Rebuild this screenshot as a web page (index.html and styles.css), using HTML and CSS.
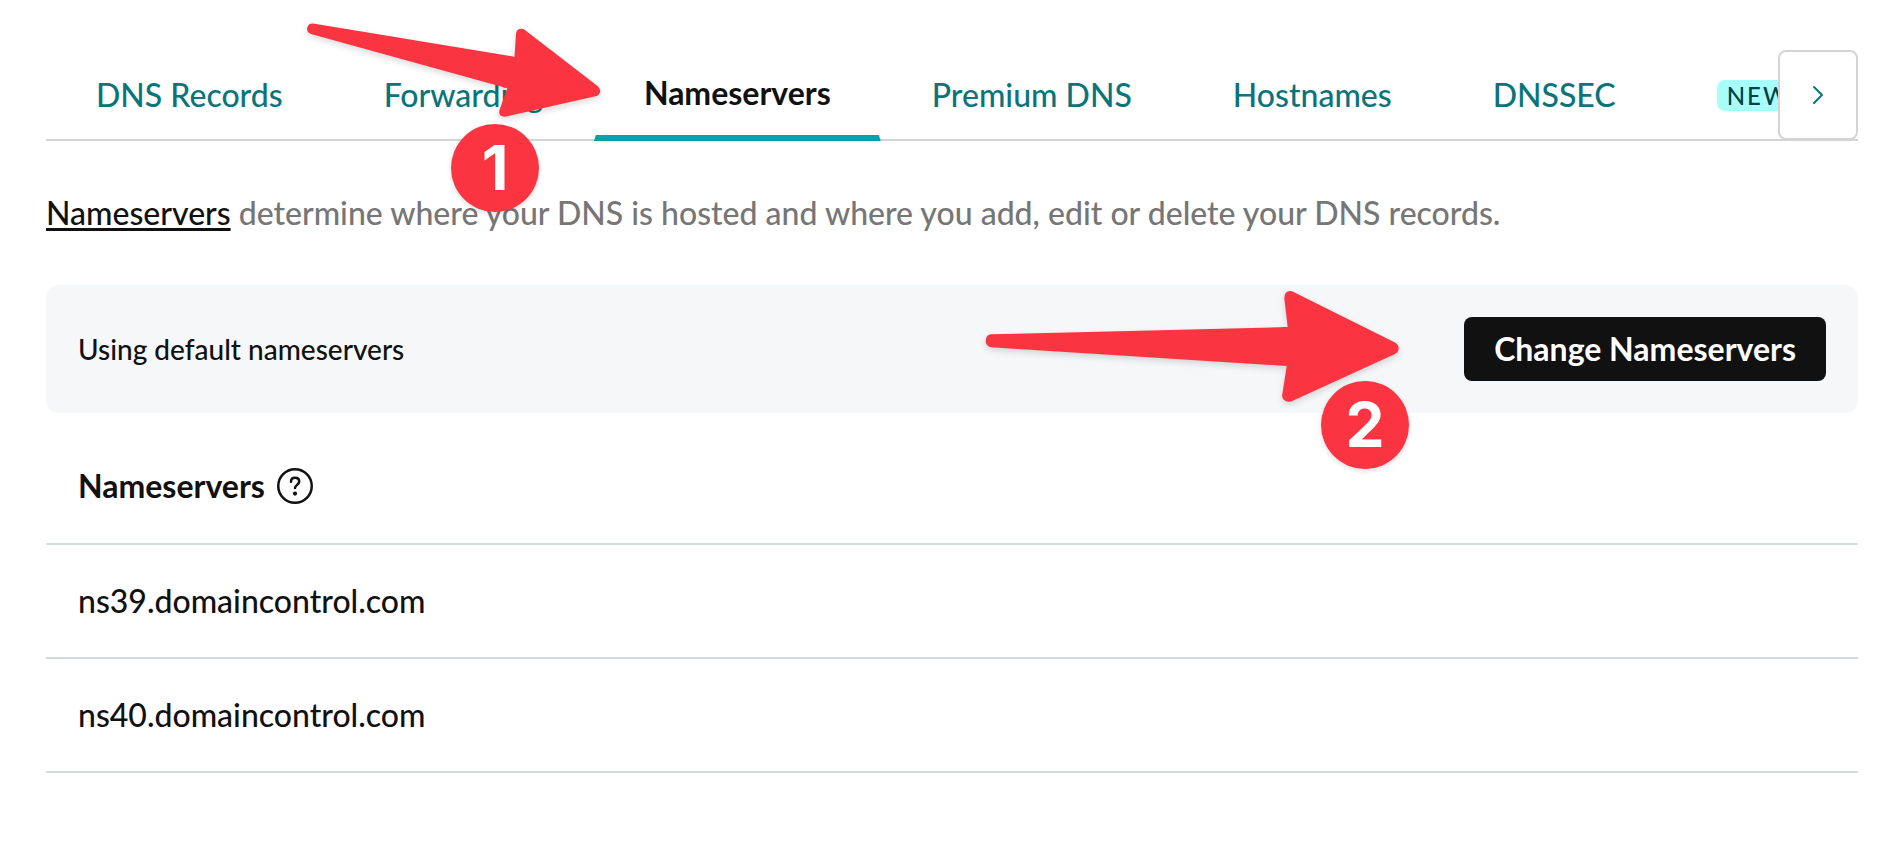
FILE: index.html
```html
<!DOCTYPE html>
<html lang="en">
<head>
<meta charset="utf-8">
<title>Nameservers</title>
<meta name="viewport" content="width=device-width, initial-scale=1">
<link rel="stylesheet" href="styles.css">
</head>
<body>
<main class="page">
  <div class="tabbar">
    <nav class="tabs" aria-label="DNS management">
      <a class="tab" href="#records">DNS Records</a>
      <a class="tab" href="#forwarding">Forwarding</a>
      <a class="tab tab-active" href="#nameservers" aria-current="page">Nameservers</a>
      <a class="tab" href="#premium">Premium DNS</a>
      <a class="tab" href="#hostnames">Hostnames</a>
      <a class="tab" href="#dnssec">DNSSEC</a>
      <a class="tab" href="#new"><span class="badge">NEW</span></a>
    </nav>
    <button class="scroll-next" type="button" aria-label="Next tabs">
      <svg width="12" height="20" viewBox="0 0 12 20" fill="none" stroke="currentColor" stroke-width="2" stroke-linecap="round" stroke-linejoin="round"><path d="M2 2l8 8-8 8"/></svg>
    </button>
    <svg class="arrow arrow-one" width="310" height="110" viewBox="300 16 310 110" aria-hidden="true">
      <path d="M313 23.6 514.5 56.7 516 34Q516.3 28.7 521.5 28.7 523.7 28.8 525.5 30.5L597.5 86Q600.3 88.4 600.2 91 599.8 95 596.5 95.9L506 116.6Q499 117.6 499.2 111.5L500 108.5 507.3 88.3 311 33.9Q306.8 32.3 307 28.7 308 23.2 313 23.6Z"/>
    </svg>
    <span class="step step-one">1</span>
  </div>

  <p class="intro"><a class="intro-link" href="#help">Nameservers</a> determine where your DNS is hosted and where you add, edit or delete your DNS records.</p>

  <section class="panel">
    <span class="panel-text">Using default nameservers</span>
    <button class="primary" type="button">Change Nameservers</button>
    <svg class="arrow arrow-two" width="430" height="130" viewBox="976 282 430 130" aria-hidden="true">
      <path d="M991 334.3 1287.7 327 1284.3 298.3Q1284.3 291.4 1290 291 1291.8 291 1293.5 292L1394.5 342.3Q1398.7 344.6 1398.7 348.5 1398.5 352 1395 354L1291.7 401.2Q1287 402.6 1284 400 1281.8 398 1282.2 395L1286.7 366 991 347.3Q985.9 346.5 985.7 341 986 334.6 991 334.3Z"/>
    </svg>
    <span class="step step-two">2</span>
  </section>

  <table class="servers">
    <thead>
      <tr><th scope="col">
        <div class="heading">Nameservers
          <button class="help" type="button" aria-label="About nameservers">
            <svg width="36" height="36" viewBox="0 0 36 36" fill="none" stroke="currentColor" stroke-linecap="round"><circle cx="18" cy="18" r="16.75" stroke-width="2.5"/><path d="M14 13.8C14 11.4 15.6 9.8 18 9.8s4.2 1.5 4.2 3.8c0 3.1-4.2 3.4-4.2 6.4" stroke-width="2.5"/><circle cx="18" cy="25.6" r="2.1" fill="currentColor" stroke="none"/></svg>
          </button>
        </div>
      </th></tr>
    </thead>
    <tbody>
      <tr><td>ns39.domaincontrol.com</td></tr>
      <tr><td>ns40.domaincontrol.com</td></tr>
    </tbody>
  </table>
</main>
</body>
</html>
```
FILE: styles.css
```css
* {
  box-sizing: border-box;
}

body {
  margin: 0;
  background: #fff;
  color: #111;
  font-family: Lato, "Open Sans", sans-serif;
  font-size: 32px;
  font-weight: 500;
  line-height: 48px;
}

button {
  font: inherit;
  cursor: pointer;
}

.page {
  padding: 50px 42px 48px 46px;
}

/* Tab bar */
.tabbar {
  position: relative;
  border-bottom: 2px solid #d4d4d4;
}

.tabs {
  display: flex;
  gap: 1px;
  overflow: hidden;
  margin-bottom: -2px;
}

.tab {
  position: relative;
  flex: none;
  padding: 21px 50px 22px;
  color: #09757a;
  text-decoration: none;
}

.tab-active {
  padding: 19px 50px 24px;
  color: #111;
  font-weight: 700;
}

.tab-active::after {
  content: "";
  position: absolute;
  inset: auto 0 0;
  height: 6px;
  background: #00a4a6;
  clip-path: polygon(2px 0, calc(100% - 2px) 0, 100% 100%, 0 100%);
}

.badge {
  display: inline-block;
  padding: 0 10px;
  border-radius: 8px;
  background: #a6fff8;
  color: #004249;
  font-size: 24px;
  line-height: 31px;
  letter-spacing: 2px;
  vertical-align: 2px;
}

.scroll-next {
  position: absolute;
  top: 0;
  right: 0;
  bottom: -1px;
  display: grid;
  place-items: center;
  width: 80px;
  padding: 0;
  border: 2px solid #d4d4d4;
  border-radius: 8px;
  background: #fff;
  color: #09757a;
}

/* Introduction */
.intro {
  margin: 48px 0;
  color: #767676;
}

.intro-link {
  color: #111;
  text-decoration-thickness: 3px;
  text-underline-offset: 3px;
  text-decoration-skip-ink: none;
}

/* Status panel */
.panel {
  position: relative;
  display: flex;
  align-items: center;
  justify-content: space-between;
  padding: 32px;
  border-radius: 12px;
  background: #f5f7f8;
}

.panel-text {
  font-size: 28px;
}

.primary {
  padding: 8px 30px;
  border: 0;
  border-radius: 8px;
  background: #111;
  color: #fff;
  font-weight: 700;
}

/* Nameserver list */
.servers {
  width: 100%;
  border-collapse: collapse;
}

.servers th,
.servers td {
  padding: 32px;
  border-bottom: 2px solid #d4dbe0;
  text-align: left;
}

.servers th {
  padding: 49px 32px 33px;
}

.heading {
  display: flex;
  align-items: center;
  gap: 12px;
}

.help {
  display: flex;
  padding: 0;
  border: 0;
  background: none;
  color: #111;
}

/* Step annotations */
.arrow {
  position: absolute;
  fill: #fa3441;
  filter: drop-shadow(0 3px 3px rgb(0 0 0 / 14%));
  pointer-events: none;
}

.arrow-one {
  top: -34px;
  left: 254px;
}

.arrow-two {
  top: -3px;
  right: 452px;
}

.step {
  position: absolute;
  width: 88px;
  height: 88px;
  border-radius: 50%;
  background: #fa3441;
  box-shadow: 0 2px 5px rgb(0 0 0 / 14%);
  color: #fff;
  font-family: Inter, sans-serif;
  font-size: 62px;
  font-weight: 700;
  line-height: 88px;
  text-align: center;
}

.step-one {
  top: 74px;
  left: 405px;
}

.step-two {
  top: 96px;
  right: 449px;
}
```
